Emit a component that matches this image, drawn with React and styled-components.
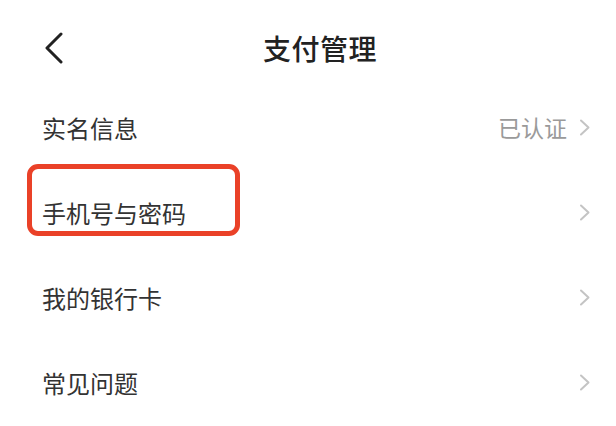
import styled, { createGlobalStyle } from 'styled-components'

const GlobalStyle = createGlobalStyle`
  html, body {
    margin: 0;
    padding: 0;
    background: #fff;
  }
  body {
    font-family: "Noto Sans CJK SC", "Noto Sans", sans-serif;
    color: #333;
  }
`

const items = [
  { label: '实名信息', value: '已认证' },
  { label: '手机号与密码', highlight: true },
  { label: '我的银行卡' },
  { label: '常见问题' },
]

const ArrowRight = () => (
  <svg width="12" height="17" viewBox="0 0 12 17" fill="none">
    <path d="M2 1.5L9.5 8.5L2 15.5" stroke="#c4c4c4" strokeWidth="2" strokeLinecap="round" strokeLinejoin="round" />
  </svg>
)

const BackIcon = () => (
  <svg width="20" height="32" viewBox="0 0 20 32" fill="none">
    <path d="M17 2L3 16L17 30" stroke="#222" strokeWidth="3" strokeLinecap="round" strokeLinejoin="round" />
  </svg>
)

const App = () => {
  return (
    <>
      <GlobalStyle />
      <Page>
        <Header>
          <BackButton>
            <BackIcon />
          </BackButton>
          <Title>支付管理</Title>
          <span />
        </Header>

        <List>
          {items.map((item) => (
            <Row key={item.label}>
              <Label>
                {item.label}
                {item.highlight ? <Marker /> : null}
              </Label>
              <Right>
                {item.value ? <Value>{item.value}</Value> : null}
                <ArrowRight />
              </Right>
            </Row>
          ))}
        </List>
      </Page>
    </>
  )
}

export default App

const Page = styled.div`
  width: 616px;
  height: 426px;
  background: #fff;
  overflow: hidden;
`

const Header = styled.div`
  height: 85px;
  padding: 10px 0 0 24px;
  box-sizing: border-box;
  display: grid;
  grid-template-columns: 1fr auto 1fr;
  align-items: center;
`

const BackButton = styled.div`
  display: flex;
  align-items: center;
  margin-left: 20px;
  margin-top: 1px;
`

const Title = styled.div`
  font-size: 28px;
  font-weight: 500;
  color: #222;
  letter-spacing: 0.5px;
`

const List = styled.div`
  display: flex;
  flex-direction: column;
`

const Row = styled.div`
  height: 85px;
  padding: 0 25px 0 42px;
  display: flex;
  align-items: center;
  justify-content: space-between;
`

const Label = styled.div`
  position: relative;
  font-size: 24px;
  color: #333;
  line-height: 1;
`

const Marker = styled.div`
  position: absolute;
  left: -15px;
  top: -37px;
  width: 213px;
  height: 72px;
  box-sizing: border-box;
  border: 5px solid #ea4128;
  border-radius: 11px;
`

const Right = styled.div`
  display: flex;
  align-items: center;
  gap: 12px;
`

const Value = styled.span`
  font-size: 23px;
  color: #9a9a9a;
  line-height: 1;
`
